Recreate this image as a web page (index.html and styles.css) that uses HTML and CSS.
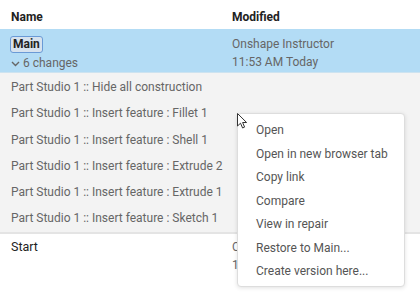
FILE: index.html
```html
<!DOCTYPE html>
<html>
<head>
<meta charset="utf-8">
<link rel="stylesheet" href="styles.css">
</head>
<body>
<div class="table">
  <div class="head">
    <div class="col-name">Name</div>
    <div class="col-mod">Modified</div>
  </div>
  <div class="row selected">
    <div class="col-name">
      <span class="badge">Main</span>
      <div class="changes"><svg class="chev" width="9" height="6" viewBox="0 0 9 6"><path d="M1 1 L4.5 4.5 L8 1" fill="none" stroke="#666" stroke-width="1.4"/></svg>6 changes</div>
    </div>
    <div class="col-mod sub">
      <div>Onshape Instructor</div>
      <div class="line2">11:53 AM Today</div>
    </div>
  </div>
  <div class="list">
    <div class="item">Part Studio 1 :: Hide all construction</div>
    <div class="item">Part Studio 1 :: Insert feature : Fillet 1</div>
    <div class="item">Part Studio 1 :: Insert feature : Shell 1</div>
    <div class="item">Part Studio 1 :: Insert feature : Extrude 2</div>
    <div class="item">Part Studio 1 :: Insert feature : Extrude 1</div>
    <div class="item">Part Studio 1 :: Insert feature : Sketch 1</div>
  </div>
  <div class="row start">
    <div class="col-name">Start</div>
    <div class="col-mod sub">
      <div>Onshape Instructor</div>
      <div class="line2">11:40 AM Today</div>
    </div>
  </div>
</div>
<div class="menu">
  <div class="mi">Open</div>
  <div class="mi">Open in new browser tab</div>
  <div class="mi">Copy link</div>
  <div class="mi">Compare</div>
  <div class="mi">View in repair</div>
  <div class="mi">Restore to Main...</div>
  <div class="mi">Create version here...</div>
</div>
<svg class="cursor" width="12" height="18" viewBox="0 0 12 18"><path d="M0.5 0.5 L0.5 13 L3.5 10.2 L5.6 15 L7.6 14.1 L5.6 9.5 L9.6 9.5 Z" fill="#fff" stroke="#333" stroke-width="1"/></svg>
</body>
</html>
```
FILE: styles.css
```css
html, body { margin: 0; padding: 0; }
body {
  width: 420px; height: 300px; overflow: hidden; position: relative;
  background: #fff;
  font-family: Roboto, "Noto Sans", sans-serif;
  color: #222;
}
.table { display: flex; flex-direction: column; }
.head {
  display: flex; height: 29px; box-sizing: border-box; padding-top: 5px; align-items: center;
  font-weight: 700; font-size: 12px; color: #222;
}
.col-name { width: 232px; padding-left: 11px; box-sizing: border-box; }
.col-mod { flex: 1; }
.row { display: flex; }
.selected { background: #b3dcf5; height: 44px; box-sizing: border-box; padding-top: 4px; border-bottom: 1px solid #cde3f0; }
.badge {
  display: inline-block; font-size: 12px; font-weight: 700; color: #222;
  background: #d6e2ee; border: 1px solid #6a9ad6; border-radius: 3px;
  padding: 0 2px; line-height: 15px; margin-left: -1px;
}
.changes { font-size: 12px; color: #666; margin-top: 3px; display: flex; align-items: center; }
.chev { margin-right: 3px; margin-top: 1px; }
.sub { font-size: 12px; color: #666; padding-top: 4px; }
.sub .line2 { margin-top: 4px; }
.list { background: #f3f3f3; padding-top: 1px; border-bottom: 2px solid #e4e4e4; }
.item { height: 26.3px; line-height: 26.3px; padding-left: 11px; font-size: 12px; color: #666; }
.start { padding-top: 5px; }
.start .col-name { font-size: 12.5px; color: #222; }
.start .sub { padding-top: 1px; }
.menu {
  position: absolute; left: 237px; top: 113px; width: 168px;
  background: #fff; border: 1px solid #ddd; border-radius: 4px;
  box-shadow: 0 1px 4px rgba(0,0,0,0.12);
  padding: 5px 0; box-sizing: border-box; height: 174px;
}
.mi { height: 23.5px; line-height: 23.5px; padding-left: 18px; font-size: 12px; color: #555; white-space: nowrap; }
.cursor { position: absolute; left: 237px; top: 113px; }
```
